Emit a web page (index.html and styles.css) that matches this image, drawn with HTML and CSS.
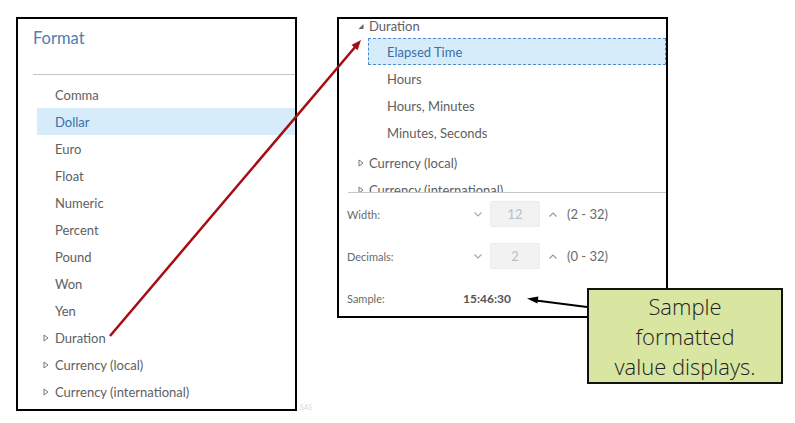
FILE: index.html
```html
<!DOCTYPE html>
<html lang="en">
  <head>
    <meta charset="UTF-8" />
    <meta name="viewport" content="width=device-width, initial-scale=1.0" />
    <title>Format - Sample value</title>
    <link rel="stylesheet" href="styles.css">
  </head>
  <body>
    <div class="canvas">
      <!-- left panel: list of formats -->
      <section class="panel format-panel">
        <h1 class="panel-title">Format</h1>
        <div class="rule"></div>
        <ul class="tree">
          <li class="row">Comma</li>
          <li class="row selected">Dollar</li>
          <li class="row">Euro</li>
          <li class="row">Float</li>
          <li class="row">Numeric</li>
          <li class="row">Percent</li>
          <li class="row">Pound</li>
          <li class="row">Won</li>
          <li class="row">Yen</li>
          <li class="row group">
            <svg class="twisty" width="6" height="8" viewBox="0 0 6 8"><path d="M1 1 L5 4 L1 7 Z" fill="none" stroke="#777" stroke-width="1"/></svg>Duration
          </li>
          <li class="row group">
            <svg class="twisty" width="6" height="8" viewBox="0 0 6 8"><path d="M1 1 L5 4 L1 7 Z" fill="none" stroke="#777" stroke-width="1"/></svg>Currency (local)
          </li>
          <li class="row group">
            <svg class="twisty" width="6" height="8" viewBox="0 0 6 8"><path d="M1 1 L5 4 L1 7 Z" fill="none" stroke="#777" stroke-width="1"/></svg>Currency (international)
          </li>
        </ul>
      </section>

      <!-- right panel: expanded Duration group and options -->
      <section class="panel detail-panel">
        <div class="tree-scroll">
          <ul class="tree shifted">
            <li class="row group first">
              <svg class="twisty" width="6" height="8" viewBox="0 0 6 8"><path d="M5.5 2 L5.5 7 L0.5 7 Z" fill="#666"/></svg>Duration
            </li>
            <li class="row child focused">Elapsed Time</li>
            <li class="row child">Hours</li>
            <li class="row child">Hours, Minutes</li>
            <li class="row child last">Minutes, Seconds</li>
            <li class="row group">
              <svg class="twisty" width="6" height="8" viewBox="0 0 6 8"><path d="M1 1 L5 4 L1 7 Z" fill="none" stroke="#777" stroke-width="1"/></svg>Currency (local)
            </li>
            <li class="row group">
              <svg class="twisty" width="6" height="8" viewBox="0 0 6 8"><path d="M1 1 L5 4 L1 7 Z" fill="none" stroke="#777" stroke-width="1"/></svg>Currency (international)
            </li>
          </ul>
        </div>

        <div class="fields">
          <div class="field">
            <span class="field-label">Width:</span>
            <svg class="chevron" width="8" height="5" viewBox="0 0 8 5"><path d="M0.5 0.5 L4 4 L7.5 0.5" fill="none" stroke="#aaa" stroke-width="1.2"/></svg>
            <span class="spin-box">12</span>
            <svg class="chevron" width="8" height="5" viewBox="0 0 8 5"><path d="M0.5 4.5 L4 1 L7.5 4.5" fill="none" stroke="#999" stroke-width="1.2"/></svg>
            <span class="range">(2 - 32)</span>
          </div>
          <div class="field">
            <span class="field-label">Decimals:</span>
            <svg class="chevron" width="8" height="5" viewBox="0 0 8 5"><path d="M0.5 0.5 L4 4 L7.5 0.5" fill="none" stroke="#aaa" stroke-width="1.2"/></svg>
            <span class="spin-box">2</span>
            <svg class="chevron" width="8" height="5" viewBox="0 0 8 5"><path d="M0.5 4.5 L4 1 L7.5 4.5" fill="none" stroke="#999" stroke-width="1.2"/></svg>
            <span class="range">(0 - 32)</span>
          </div>
          <div class="field">
            <span class="field-label short">Sample:</span>
            <span class="sample">15:46:30</span>
          </div>
        </div>
      </section>

      <div class="callout">Sample<br>formatted<br>value displays.</div>

      <svg class="arrows" width="795" height="423" viewBox="0 0 795 423">
        <line x1="110" y1="336" x2="356" y2="46" stroke="#a50d12" stroke-width="2.5"/>
        <polygon points="361,40 357.6,50.2 351.5,45" fill="#a50d12"/>
        <line x1="587" y1="307" x2="536" y2="300.5" stroke="#000" stroke-width="2"/>
        <polygon points="527,298.5 538.4,296.6 537.4,303.5" fill="#000"/>
      </svg>

      <span class="watermark">SAS</span>
    </div>
  </body>
</html>
```

FILE: styles.css
```css
body {
  margin: 0;
  background-color: #ffffff;
  font-family: Lato, "Open Sans", sans-serif;
  color: #606060;
}

.canvas {
  position: relative;
  width: 795px;
  height: 423px;
  overflow: hidden;
}

/* the two screenshot panels sit on a free canvas */
.panel {
  position: absolute;
  border: 2px solid #000;
  background-color: #fff;
  box-sizing: border-box;
  overflow: hidden;
}

.format-panel {
  left: 16px;
  top: 17px;
  width: 281px;
  height: 394px;
}

.detail-panel {
  left: 337px;
  top: 17px;
  width: 331px;
  height: 301px;
}

.panel-title {
  margin: 0;
  padding: 9px 0 0 15px;
  font-size: 16.5px;
  font-weight: 400;
  line-height: 20px;
  color: #4d7db2;
}

.rule {
  height: 1px;
  margin: 26px 0 6px 15px;
  background-color: #c6c6c6;
}

.tree {
  list-style: none;
  margin: 0 0 0 19px;
  padding: 0;
  font-size: 13px;
}

.row {
  display: flex;
  align-items: center;
  height: 27px;
  padding-left: 18px;
}

.row.selected {
  background-color: #d7ecfb;
  color: #3b6fa6;
}

.row.group {
  padding-left: 6px;
}

.twisty {
  flex: none;
  margin-right: 6px;
}

/* right panel tree */
.tree-scroll {
  height: 173px;
  margin-left: 9px;
  overflow: hidden;
  border-bottom: 1px solid #c6c6c6;
}

.tree.shifted {
  margin: -6px 0 0 0;
}

.tree.shifted .row.group {
  padding-left: 10px;
}

.tree.shifted .row.first {
  height: 25px;
}

.tree.shifted .twisty {
  margin-right: 5px;
}

.row.child {
  margin-left: 20px;
  padding-left: 18px;
  border: 1px solid transparent;
  box-sizing: border-box;
}

.row.child.last {
  margin-bottom: 3px;
}

.row.focused {
  background-color: #d7ecfb;
  border: 1px dashed #4c8fcf;
  color: #3b6fa6;
}

.fields {
  padding-left: 8px;
}

.field {
  display: flex;
  align-items: center;
  height: 42px;
  font-size: 11px;
  color: #6a6a6a;
}

.field-label {
  width: 127px;
  flex: none;
}

.field-label.short {
  width: 116px;
}

.spin-box {
  width: 50px;
  height: 26px;
  margin: 0 9px 0 8px;
  box-sizing: border-box;
  border: 1px solid #ececec;
  border-radius: 2px;
  background-color: #f2f2f2;
  color: #bdbdbd;
  font-size: 13px;
  display: flex;
  align-items: center;
  justify-content: center;
}

.range {
  margin-left: 10px;
  font-size: 13px;
}

.sample {
  font-size: 12px;
  font-weight: 700;
  color: #555;
}

/* annotation */
.callout {
  position: absolute;
  left: 587px;
  top: 288px;
  width: 196px;
  height: 96px;
  box-sizing: border-box;
  border: 2px solid #111;
  background-color: #d8e6a2;
  color: #222;
  font-family: "Open Sans", sans-serif;
  font-size: 22px;
  font-weight: 300;
  line-height: 30px;
  text-align: center;
  padding-top: 1px;
}

.arrows {
  position: absolute;
  left: 0;
  top: 0;
  pointer-events: none;
}

.watermark {
  position: absolute;
  left: 300px;
  top: 403px;
  font-size: 7px;
  color: #dcdcdc;
}
```
